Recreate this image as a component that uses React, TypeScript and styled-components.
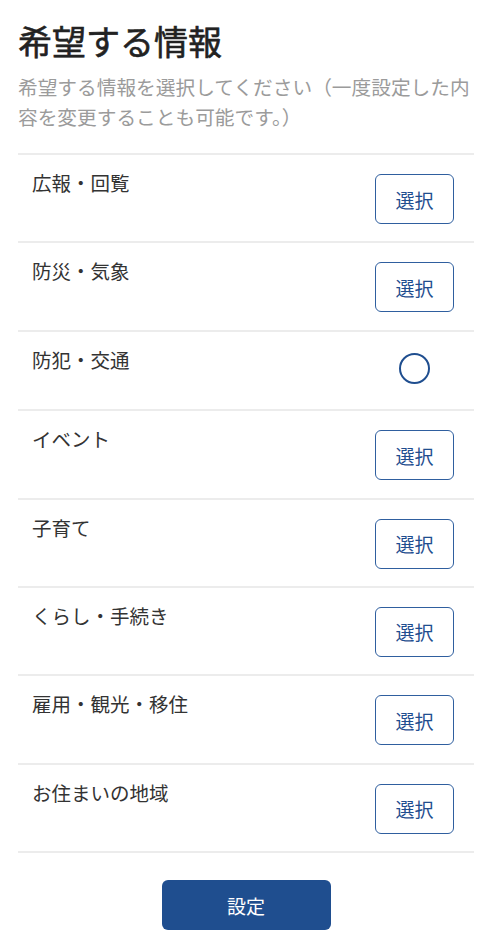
import React from 'react';
import styled, { createGlobalStyle } from 'styled-components';

interface Topic {
  id: string;
  label: string;
  selected: boolean;
}

const topics: ReadonlyArray<Topic> = [
  { id: 'pr', label: '広報・回覧', selected: false },
  { id: 'disaster', label: '防災・気象', selected: false },
  { id: 'crime', label: '防犯・交通', selected: true },
  { id: 'event', label: 'イベント', selected: false },
  { id: 'child', label: '子育て', selected: false },
  { id: 'life', label: 'くらし・手続き', selected: false },
  { id: 'work', label: '雇用・観光・移住', selected: false },
  { id: 'area', label: 'お住まいの地域', selected: false },
];

export default () => (
  <>
    <GlobalStyle />
    <Page>
      <Title>希望する情報</Title>
      <Lead>希望する情報を選択してください（一度設定した内容を変更することも可能です。）</Lead>
      <TopicList>
        {topics.map(({ id, label, selected }) => (
          <TopicRow key={id}>
            <TopicLabel>{label}</TopicLabel>
            <ActionSlot>{selected ? <SelectedMark /> : <SelectButton type="button">選択</SelectButton>}</ActionSlot>
          </TopicRow>
        ))}
      </TopicList>
      <Footer>
        <SubmitButton type="button">設定</SubmitButton>
      </Footer>
    </Page>
  </>
);

const color = {
  title: '#222222',
  text: '#333333',
  lead: '#9b9b9b',
  divider: '#ececec',
  blue: '#2f5f9f',
  navy: '#1f4e8f',
  white: '#ffffff',
};

const GlobalStyle = createGlobalStyle`
  body {
    margin: 0;
    background: ${color.white};
    font-family: "Noto Sans CJK JP", "Noto Sans", sans-serif;
  }
  button {
    font-family: inherit;
  }
`;

const Page = styled.div`
  box-sizing: border-box;
  width: 492px;
  padding: 20px 18px 14px 18px;
`;

const Title = styled.h1`
  margin: 0;
  font-size: 34px;
  line-height: 42px;
  font-weight: 400;
  -webkit-text-stroke: 0.6px ${color.title};
  color: ${color.title};
`;

const Lead = styled.p`
  margin: 10px 0 0 0;
  font-size: 19.7px;
  line-height: 30px;
  color: ${color.lead};
`;

const TopicList = styled.div`
  margin-top: 21px;
  border-bottom: 2px solid ${color.divider};
`;

const TopicRow = styled.div`
  display: flex;
  align-items: flex-start;
  justify-content: space-between;
  padding: 19px 20px 17.4px 14px;
  border-top: 2px solid ${color.divider};
`;

const TopicLabel = styled.div`
  flex: 1;
  margin-top: -3px;
  font-size: 19.5px;
  line-height: 24px;
  color: ${color.text};
`;

const ActionSlot = styled.div`
  display: flex;
  justify-content: center;
  width: 79px;
  min-height: 41px;
`;

const SelectButton = styled.button`
  box-sizing: border-box;
  width: 79px;
  height: 50px;
  padding: 0;
  border: 1.5px solid ${color.blue};
  border-radius: 6px;
  background: ${color.white};
  color: ${color.navy};
  font-size: 19px;
  line-height: 1;
`;

const SelectedMark = styled.span`
  box-sizing: border-box;
  width: 31px;
  height: 31px;
  margin-top: 2px;
  border: 2.5px solid ${color.navy};
  border-radius: 50%;
`;

const Footer = styled.div`
  display: flex;
  justify-content: center;
  margin-top: 27px;
`;

const SubmitButton = styled.button`
  width: 169px;
  height: 50px;
  border: none;
  border-radius: 6px;
  background: ${color.navy};
  color: ${color.white};
  font-size: 19px;
  line-height: 1;
`;
